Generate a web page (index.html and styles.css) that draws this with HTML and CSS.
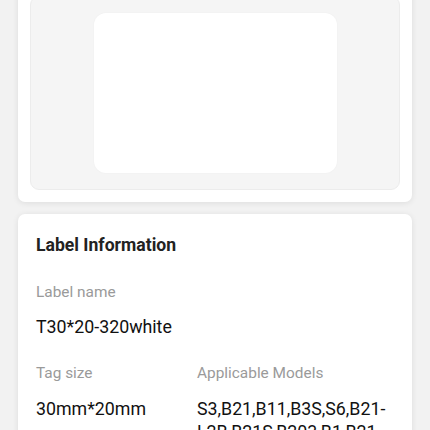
FILE: index.html
```html
<!DOCTYPE html>
<html lang="en">
<head>
  <meta charset="UTF-8" />
  <title>Label Details</title>
  <link rel="stylesheet" href="styles.css">
</head>
<body>

  <div class="page">
    <div class="card preview-card">
      <div class="preview-box">
        <div class="label-sheet"></div>
      </div>
    </div>

    <div class="card info-card">
      <h2 class="info-title">Label Information</h2>

      <div class="field">
        <div class="field-label">Label name</div>
        <div class="field-value">T30*20-320white</div>
      </div>

      <div class="field-row">
        <div class="field">
          <div class="field-label">Tag size</div>
          <div class="field-value">30mm*20mm</div>
        </div>
        <div class="field">
          <div class="field-label">Applicable Models</div>
          <div class="field-value">S3,B21,B11,B3S,S6,B21-L2B,B21S,B203,B1,B21 Pro,B3S Pro</div>
        </div>
      </div>
    </div>
  </div>

</body>
</html>
```

FILE: styles.css
```css
body {
  margin: 0;
  padding: 0;
  overflow: hidden;
  height: 430px;
  background: #f2f2f2;
  font-family: Roboto, 'Noto Sans', sans-serif;
  color: #1a1a1a;
}
.page {
  margin-top: -16px;
  padding: 0 18px;
  display: flex;
  flex-direction: column;
  gap: 12px;
}
.card {
  background: #fff;
  border-radius: 7px;
  box-shadow: 0 1px 6px rgba(0, 0, 0, 0.09);
}
.preview-card {
  padding: 12px;
}
.preview-box {
  background: #f5f5f5;
  border: 1px solid #ececec;
  border-radius: 9px;
  height: 192px;
  display: flex;
  justify-content: center;
  align-items: center;
}
.label-sheet {
  width: 243px;
  height: 160px;
  background: #fff;
  border-radius: 12px;
  box-shadow: 0 0 2px rgba(0, 0, 0, 0.04);
}
.info-card {
  padding: 19px 18px 20px;
}
.info-title {
  margin: 0;
  font-size: 17.6px;
  line-height: 24px;
  font-weight: 700;
  color: #222;
}
.field {
  margin-top: 25px;
}
.field-label {
  font-size: 15.4px;
  line-height: 20px;
  color: #9a9a9a;
}
.field-value {
  margin-top: 13px;
  font-size: 17.8px;
  line-height: 23px;
  color: #111;
}
.field-row {
  display: grid;
  grid-template-columns: 161px 1fr;
}
.field-row .field {
  margin-top: 25px;
}
.field-row .field-value {
  margin-top: 14px;
}
```
